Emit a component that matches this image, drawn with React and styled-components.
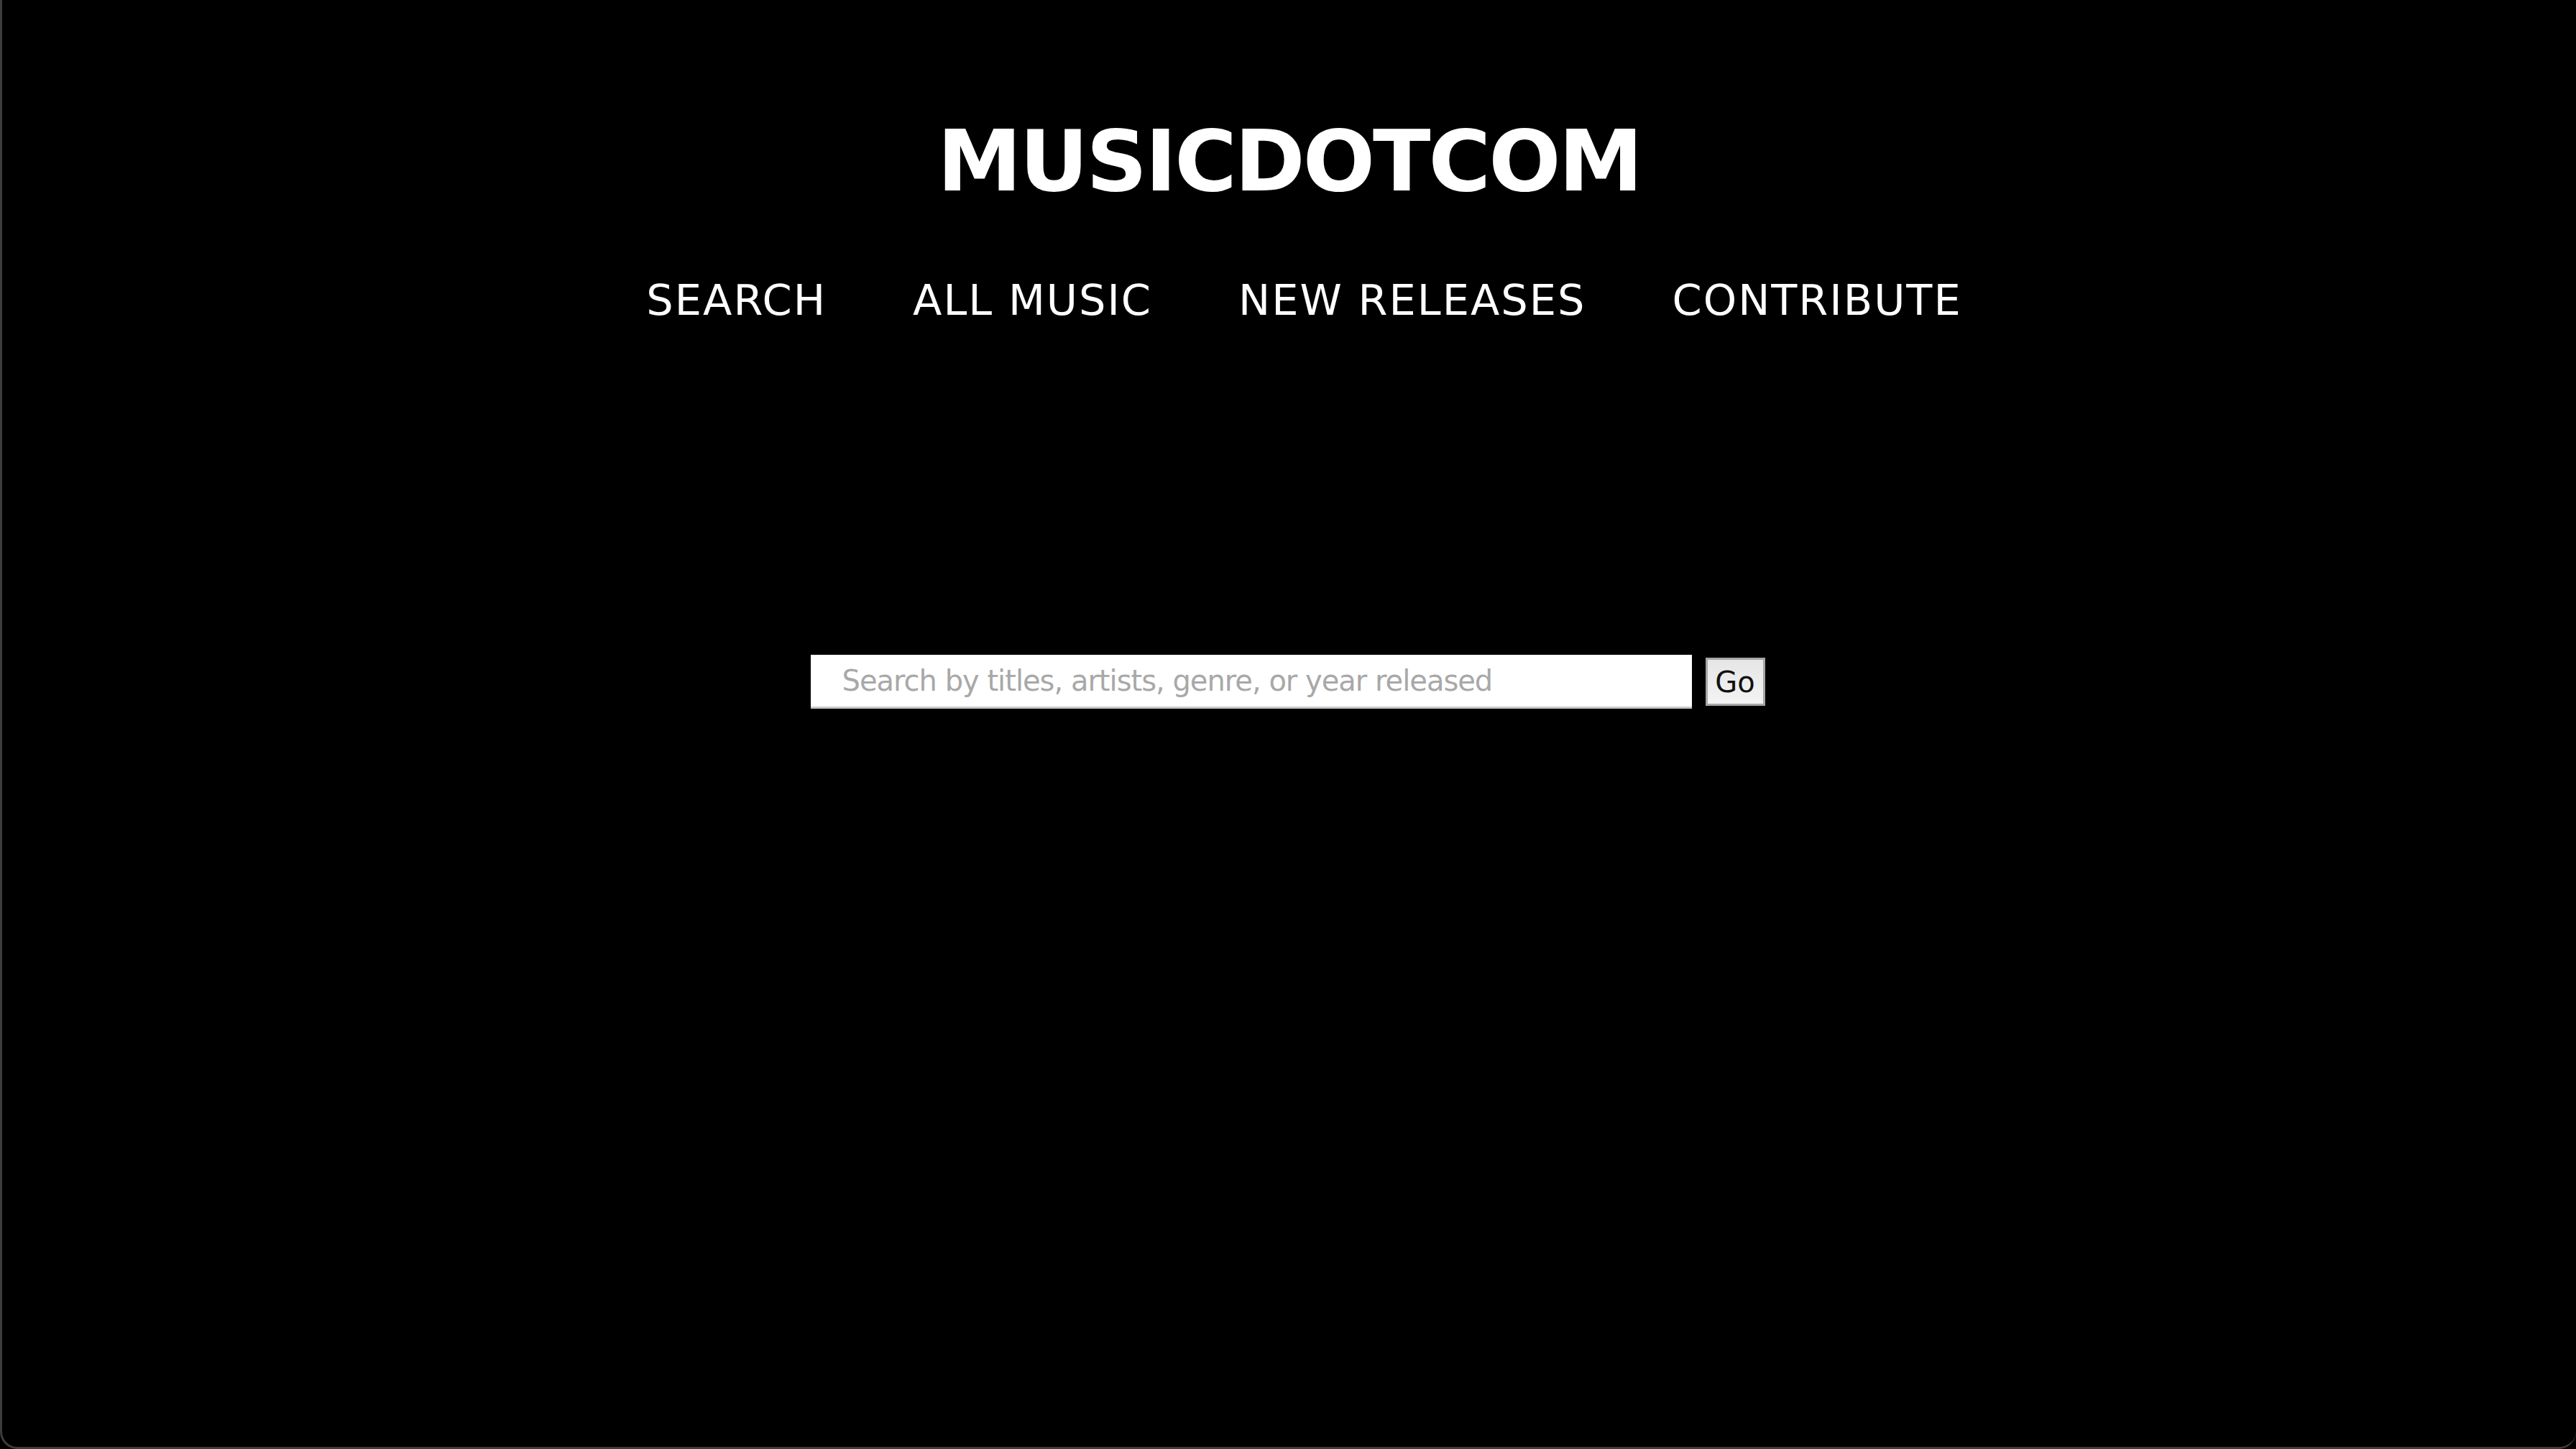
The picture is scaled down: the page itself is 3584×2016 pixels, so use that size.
import React from 'react';
import styled, { createGlobalStyle } from 'styled-components';

const GlobalStyle = createGlobalStyle`
  html, body {
    margin: 0;
    padding: 0;
    background: #000;
  }

  body {
    font-family: "DejaVu Sans", "Liberation Sans", sans-serif;
    color: #fff;
  }
`;

const navItems = ['SEARCH', 'ALL MUSIC', 'NEW RELEASES', 'CONTRIBUTE'];

const App = () => (
  <>
    <GlobalStyle />
    <Frame>
      <Header>
        <Title>MUSICDOTCOM</Title>
        <Nav>
          {navItems.map(item => (
            <NavLink key={item} href="#">{item}</NavLink>
          ))}
        </Nav>
      </Header>
      <SearchForm onSubmit={e => e.preventDefault()}>
        <SearchInput
          type="text"
          placeholder="Search by titles, artists, genre, or year released"
        />
        <GoButton type="submit">Go</GoButton>
      </SearchForm>
    </Frame>
  </>
);

const Frame = styled.div`
  box-sizing: border-box;
  min-height: 100vh;
  background: #000;
  border-left: 3px solid #3c3c3c;
  border-bottom: 3px solid #3c3c3c;
  border-bottom-left-radius: 24px;
  border-bottom-right-radius: 24px;
  display: flex;
  flex-direction: column;
  align-items: center;
`;

const Header = styled.header`
  display: flex;
  flex-direction: column;
  align-items: center;
  padding-top: 158px;
`;

const Title = styled.h1`
  margin: 0;
  font-family: "DejaVu Sans", sans-serif;
  font-weight: 700;
  font-size: 118px;
  line-height: 132px;
  letter-spacing: -3px;
  color: #fff;
`;

const Nav = styled.nav`
  display: flex;
  gap: 120px;
  margin-top: 93px;
  padding-left: 42px;
`;

const NavLink = styled.a`
  font-family: "DejaVu Sans", sans-serif;
  font-size: 59px;
  line-height: 70px;
  letter-spacing: 2px;
  color: #fff;
  text-decoration: none;
`;

const SearchForm = styled.form`
  display: flex;
  align-items: center;
  gap: 19px;
  margin-top: 458px;
  padding-right: 4px;
`;

const SearchInput = styled.input`
  box-sizing: border-box;
  width: 1226px;
  height: 75px;
  padding: 0 44px;
  border: none;
  border-bottom: 3px solid #c8c8c8;
  background: #fff;
  font-family: "DejaVu Sans", sans-serif;
  font-size: 40px;
  letter-spacing: -1px;
  color: #222;
  outline: none;

  &::placeholder {
    color: #a8a8a8;
  }
`;

const GoButton = styled.button`
  box-sizing: border-box;
  width: 83px;
  height: 67px;
  padding: 0;
  border: 3px solid #a6a6a6;
  background: linear-gradient(#e6e6e6, #f3f3f3);
  font-family: "DejaVu Sans", sans-serif;
  font-size: 40px;
  color: #111;
  cursor: pointer;
`;

export default App;
